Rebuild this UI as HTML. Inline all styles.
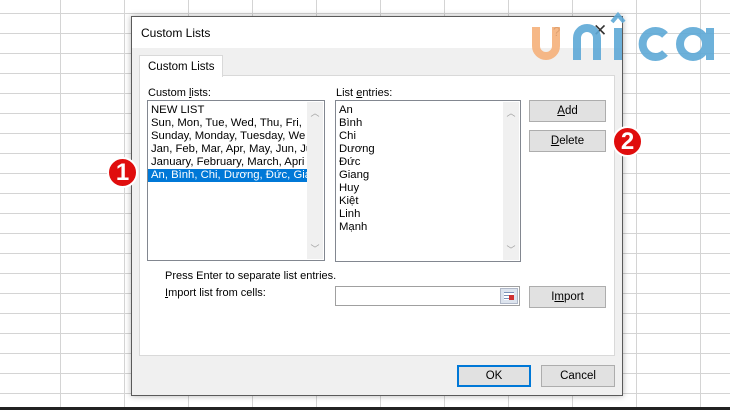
<!DOCTYPE html>
<html><head><meta charset="utf-8"><style>
*{margin:0;padding:0;box-sizing:border-box}
body{width:730px;height:410px;overflow:hidden;position:relative;font-family:"Liberation Sans",sans-serif;font-size:11px;color:#000;
background-color:#fff;
background-image:linear-gradient(to right,#d4d4d4 1px,transparent 1px),linear-gradient(to bottom,#d4d4d4 1px,transparent 1px);
background-size:64px 20px;background-position:124px 13px}
.a{position:absolute}
.dlg{left:131px;top:16px;width:492px;height:380px;background:#f0f0f0;border:1px solid #5a5a5a;box-shadow:0 0 6px rgba(0,0,0,.3)}
.btn{position:absolute;background:#e1e1e1;border:1px solid #adadad;text-align:center;line-height:20px;font-size:11.5px}
.box{position:absolute;background:#fff;border:1px solid #828790}
.sb{position:absolute;top:1px;bottom:1px;right:1px;width:16px;background:#f0f0f0;color:#a0a0a0;font-size:9px;text-align:center}
.ln{height:13px;line-height:13px;white-space:nowrap;padding-left:3px;font-size:11.3px}
u{text-decoration:underline}
.badge{position:absolute;width:31px;height:31px;border-radius:50%;background:#e00d0d;border:2px solid #fff;color:#fff;font-weight:bold;font-size:24px;text-align:center;line-height:27px}
</style></head><body>
<div class="a dlg">
 <div class="a" style="left:0;top:0;width:490px;height:31px;background:#fff"></div>
 <div class="a" style="left:9px;top:9px;font-size:12px">Custom Lists</div>
 <div class="a" style="left:421px;top:7px;font-size:13px">?</div>
 <div class="a" style="left:461px;top:4px;font-size:17px;color:#333">✕</div>
 <div class="a" style="left:7px;top:58px;width:476px;height:281px;background:#fff;border:1px solid #d9d9d9"></div>
 <div class="a" style="left:7px;top:38px;width:84px;height:22px;background:#fff;border:1px solid #d9d9d9;border-bottom:none;padding:5px 0 0 8px;font-size:11.5px">Custom Lists</div>
 <div class="a" style="left:16px;top:70px">Custom <u>l</u>ists:</div>
 <div class="box" style="left:15px;top:83px;width:178px;height:161px">
  <div style="padding-top:3px">
  <div class="ln">NEW LIST</div>
  <div class="ln">Sun, Mon, Tue, Wed, Thu, Fri,</div>
  <div class="ln" style="width:160px;overflow:hidden">Sunday, Monday, Tuesday, We</div>
  <div class="ln" style="width:160px;overflow:hidden">Jan, Feb, Mar, Apr, May, Jun, Ju</div>
  <div class="ln" style="width:160px;overflow:hidden">January, February, March, Apri</div>
  <div class="ln" style="background:#0078d7;color:#fff;width:160px;overflow:hidden">An, Bình, Chi, Dương, Đức, Gia</div>
  </div>
  <div class="sb"><div style="margin-top:4px">︿</div><div style="position:absolute;bottom:4px;width:16px">﹀</div></div>
 </div>
 <div class="a" style="left:204px;top:70px">List <u>e</u>ntries:</div>
 <div class="box" style="left:203px;top:83px;width:186px;height:162px">
  <div style="padding-top:3px">
  <div class="ln">An</div><div class="ln">Bình</div><div class="ln">Chi</div><div class="ln">Dương</div><div class="ln">Đức</div><div class="ln">Giang</div><div class="ln">Huy</div><div class="ln">Kiệt</div><div class="ln">Linh</div><div class="ln">Mạnh</div>
  </div>
  <div class="sb"><div style="margin-top:4px">︿</div><div style="position:absolute;bottom:4px;width:16px">﹀</div></div>
 </div>
 <div class="btn" style="left:397px;top:83px;width:77px;height:22px"><u>A</u>dd</div>
 <div class="btn" style="left:397px;top:113px;width:77px;height:22px"><u>D</u>elete</div>
 <div class="a" style="left:33px;top:253px">Press Enter to separate list entries.</div>
 <div class="a" style="left:33px;top:270px"><u>I</u>mport list from cells:</div>
 <div class="box" style="left:203px;top:269px;width:185px;height:20px;border-color:#a0a0a0"><div class="a" style="right:1px;top:1px;width:18px;height:16px;background:#dde4ee;border:1px solid #b0b8c8"><div style="margin:3px;height:8px;background:repeating-linear-gradient(#7c93b8 0 1px,#fff 1px 3px)"></div><div class="a" style="left:8px;top:6px;width:5px;height:5px;background:#d03030"></div></div></div>
 <div class="btn" style="left:397px;top:269px;width:77px;height:22px">I<u>m</u>port</div>
 <div class="btn" style="left:325px;top:348px;width:74px;height:22px;border:2px solid #0078d7;line-height:18px">OK</div>
 <div class="btn" style="left:409px;top:348px;width:74px;height:22px">Cancel</div>
</div>
<div class="badge" style="left:107px;top:157px">1</div>
<div class="badge" style="left:612px;top:126px">2</div>
<svg class="a" style="left:0;top:0" width="730" height="410" fill="none" stroke-width="8">
 <path d="M536 27V46A10 10 0 0 0 556 46V27" stroke="#f5b07a" opacity=".9"/>
 <g stroke="#5ea9d7" opacity=".9">
  <path d="M577 60V38A10 10 0 0 1 597 38V60"/>
  <path d="M618 28V60"/>
  <path d="M612 22L618 15L624 22" stroke-width="4"/>
  <path d="M665 35A13 13 0 1 0 665 53"/>
  <circle cx="693" cy="44" r="13"/>
  <path d="M710 28V60"/>
 </g>
</svg>
<div class="a" style="left:0;top:407px;width:730px;height:3px;background:#222"></div>
</body></html>
